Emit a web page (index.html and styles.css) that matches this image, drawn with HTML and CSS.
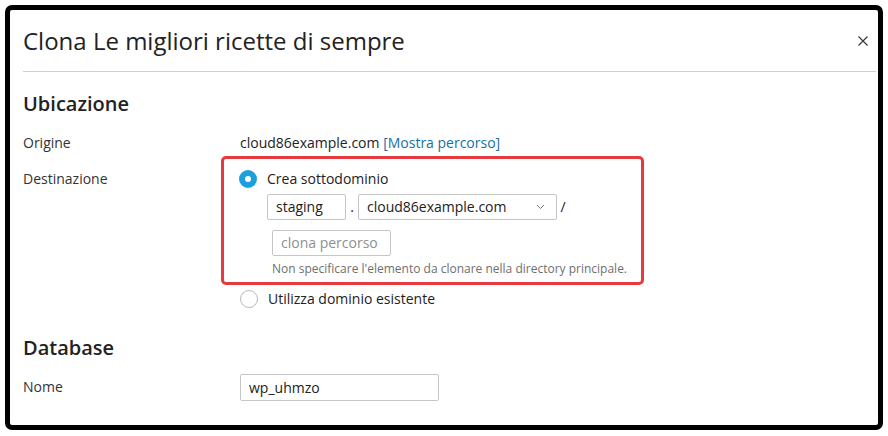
FILE: index.html
```html
<!DOCTYPE html>
<html lang="it">
<head>
  <meta charset="UTF-8" />
  <title>Clona Le migliori ricette di sempre</title>
  <link rel="stylesheet" href="styles.css">
</head>
<body>

  <div class="modal">
    <!-- Header -->
    <div class="modal-header">
      <h1>Clona Le migliori ricette di sempre</h1>
      <button class="close" aria-label="Chiudi">
        <svg width="10" height="10" viewBox="0 0 10 10"><path d="M0.5 0.5L9.5 9.5M9.5 0.5L0.5 9.5" stroke="#333" stroke-width="1.1" fill="none"/></svg>
      </button>
    </div>

    <div class="modal-body">
      <!-- Ubicazione -->
      <h2 class="section-title first">Ubicazione</h2>

      <div class="row">
        <div class="label">Origine</div>
        <div class="value">cloud86example.com <a href="#" class="link">[Mostra percorso]</a></div>
      </div>

      <div class="row">
        <div class="label label-dest">Destinazione</div>
        <div class="value">
          <div class="highlight">
            <label class="option">
              <span class="radio checked"></span>
              Crea sottodominio
            </label>
            <div class="subdomain">
              <div class="field field-sub">staging</div>
              <span class="sep">.</span>
              <div class="field field-select">
                <span>cloud86example.com</span>
                <svg width="9" height="6" viewBox="0 0 9 6"><path d="M1 1L4.5 4.5L8 1" stroke="#777" stroke-width="1" fill="none"/></svg>
              </div>
              <span class="sep slash">/</span>
            </div>
            <div class="field field-path placeholder">clona percorso</div>
            <div class="hint">Non specificare l'elemento da clonare nella directory principale.</div>
          </div>
          <label class="option option-second">
            <span class="radio"></span>
            Utilizza dominio esistente
          </label>
        </div>
      </div>

      <!-- Database -->
      <h2 class="section-title">Database</h2>

      <div class="row row-name">
        <div class="label">Nome</div>
        <div class="value">
          <div class="field field-name">wp_uhmzo</div>
        </div>
      </div>
    </div>
  </div>

</body>
</html>
```

FILE: styles.css
```css
body {
  margin: 0;
  padding: 5px;
  background: #fff;
  font-family: "Open Sans", "Noto Sans", sans-serif;
  font-size: 14px;
  color: #222;
}
.modal {
  height: 425px;
  box-sizing: border-box;
  border: 5px solid #000;
  border-radius: 7px;
  background: #fff;
  overflow: hidden;
}
.modal-header {
  display: flex;
  align-items: center;
  justify-content: space-between;
  height: 61px;
  margin: 0 2px 0 13px;
  padding-right: 8px;
  border-bottom: 1px solid #d1d1d1;
}
h1 {
  margin: 0;
  font-size: 24px;
  font-weight: 400;
  line-height: 32px;
  color: #222;
}
.close {
  border: 0;
  background: none;
  padding: 0;
  width: 10px;
  height: 10px;
  display: flex;
  align-items: center;
  justify-content: center;
}
.modal-body {
  padding-left: 13px;
}
.section-title {
  margin: 27px 0 0;
  font-size: 20px;
  font-weight: 600;
  line-height: 24px;
  color: #222;
}
.section-title.first {
  margin-top: 20px;
}
.row {
  display: grid;
  grid-template-columns: 217px 1fr;
  line-height: 20px;
}
.row + .row {
  margin-top: 3px;
}
.section-title.first + .row {
  margin-top: 17px;
}
.label {
  color: #333;
}
.label-dest {
  padding-top: 13px;
}
.link {
  color: #1570a6;
  text-decoration: none;
}
.highlight {
  width: 423px;
  box-sizing: border-box;
  margin-left: -19px;
  border: 3px solid #e63a3e;
  border-radius: 5px;
  padding: 10px 0 5px 15px;
}
.option {
  display: flex;
  align-items: center;
  gap: 10px;
  height: 20px;
}
.option-second {
  margin-top: 4px;
}
.radio {
  width: 18px;
  height: 18px;
  box-sizing: border-box;
  border-radius: 50%;
  border: 1px solid #b9b9b9;
  background: #fff;
}
.radio.checked {
  border: 6px solid #1d9fdc;
}
.subdomain {
  display: flex;
  align-items: center;
  margin: 5px 0 0 28px;
}
.field {
  height: 26px;
  box-sizing: border-box;
  border: 1px solid #c5c5c5;
  border-radius: 2px;
  padding: 0 8px;
  line-height: 24px;
  color: #222;
  background: #fff;
}
.field-sub {
  width: 79px;
}
.sep {
  width: 12px;
  text-align: center;
}
.slash {
  width: 12px;
}
.field-select {
  width: 199px;
  display: flex;
  align-items: center;
  justify-content: space-between;
  padding-right: 11px;
}
.field-path {
  width: 119px;
  margin: 10px 0 0 33px;
}
.placeholder {
  color: #8f8f8f;
}
.hint {
  margin: 5px 0 0 33px;
  font-size: 12px;
  line-height: 16px;
  color: #6f6f6f;
}
.section-title + .row {
  margin-top: 14px;
}
.row-name .label {
  padding-top: 3px;
}
.field-name {
  width: 199px;
  height: 27px;
  line-height: 25px;
}
```
